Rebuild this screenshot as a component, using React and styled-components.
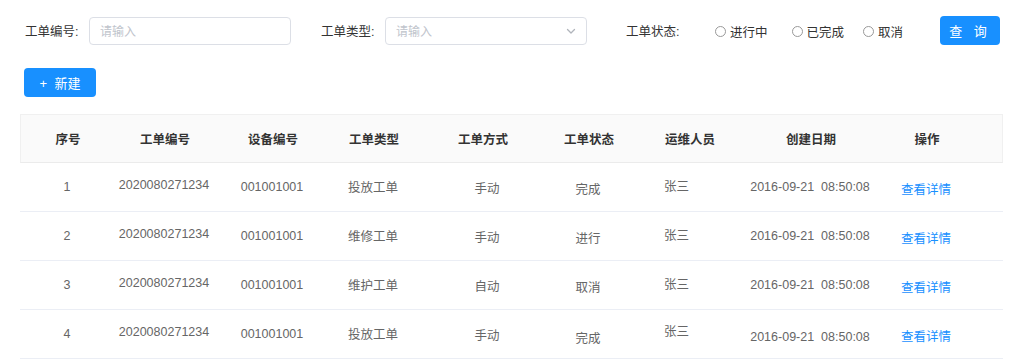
import React from "react";
import styled, { createGlobalStyle } from "styled-components";

const GlobalStyle = createGlobalStyle`
  body {
    margin: 0;
    background: #fff;
    font-family: "Liberation Sans", "Noto Sans CJK SC", sans-serif;
    color: #333;
  }
`;

const Page = styled.div`
  width: 1024px;
  height: 359px;
  overflow: hidden;
`;

const FilterBar = styled.div`
  display: flex;
  align-items: center;
  height: 29px;
  padding: 16px 24px 0 25px;
`;

const Field = styled.div`
  display: flex;
  align-items: center;
  margin-right: ${(p) => p.gap || 0}px;
`;

const Label = styled.span`
  font-size: 12.5px;
  color: #333;
  width: 54px;
  margin-right: 10px;
  white-space: nowrap;
`;

const InputBox = styled.div`
  box-sizing: border-box;
  width: 202px;
  height: 28px;
  border: 1px solid #dcdfe6;
  border-radius: 4px;
  display: flex;
  align-items: center;
  justify-content: space-between;
  padding: 0 9px 0 10px;
  font-size: 12px;
  color: #c0c4cc;
`;

const RadioGroup = styled.div`
  display: flex;
  align-items: center;
  margin-left: 25px;
  padding-top: 2px;
`;

const Radio = styled.label`
  display: flex;
  align-items: center;
  font-size: 12.5px;
  color: #333;
  margin-right: ${(p) => p.gap || 0}px;
`;

const Dot = styled.span`
  box-sizing: border-box;
  width: 11px;
  height: 11px;
  border: 1px solid #999;
  border-radius: 50%;
  margin-right: 4px;
`;

const Button = styled.button`
  box-sizing: border-box;
  height: 29px;
  width: ${(p) => p.w}px;
  border: none;
  border-radius: 4px;
  background: #1890ff;
  color: #fff;
  font-family: inherit;
  font-size: 13px;
  letter-spacing: ${(p) => (p.spaced ? "4px" : "0")};
  padding: 0;
  margin-left: ${(p) => (p.right ? "auto" : "0")};
  white-space: pre;
`;

const ActionRow = styled.div`
  padding: 23px 0 0 24px;
`;

const Table = styled.div`
  margin: 17px 21px 0 20px;
`;

const cols = "94px 100px 116px 86px 132px 80px 122px 120px 112px 1fr";

const HeadRow = styled.div`
  display: grid;
  grid-template-columns: ${cols};
  height: 47px;
  align-items: center;
  background: #fafafa;
  border: 1px solid #f0f0f0;
  border-bottom-color: #ebebeb;
`;

const HeadCell = styled.div`
  text-align: center;
  font-size: 12.5px;
  font-weight: bold;
  color: #333;
  white-space: nowrap;
`;

const Row = styled.div`
  display: grid;
  grid-template-columns: ${cols};
  height: 48px;
  align-items: center;
  border-bottom: 1px solid #ebeef5;
`;

const Cell = styled.div`
  text-align: ${(p) => p.align || "center"};
  padding-left: ${(p) => p.pad || 0}px;
  position: relative;
  top: ${(p) => p.dy || 0}px;
  font-size: 12.5px;
  color: ${(p) => (p.link ? "#1890ff" : "#666")};
  white-space: pre;
`;

const Chevron = () => (
  <svg width="12" height="12" viewBox="0 0 12 12" fill="none">
    <path d="M2.5 4.5 L6 8 L9.5 4.5" stroke="#b0b4bb" strokeWidth="1.3" strokeLinecap="round" strokeLinejoin="round" />
  </svg>
);

const headers = ["序号", "工单编号", "设备编号", "工单类型", "工单方式", "工单状态", "运维人员", "创建日期", "操作"];

const rows = [
  { no: 1, type: "投放工单", mode: "手动", state: "完成" },
  { no: 2, type: "维修工单", mode: "手动", state: "进行" },
  { no: 3, type: "维护工单", mode: "自动", state: "取消" },
  { no: 4, type: "投放工单", mode: "手动", state: "完成", low: true },
];

export default function App() {
  return (
    <Page>
      <GlobalStyle />
      <FilterBar>
        <Field gap={30}>
          <Label>工单编号:</Label>
          <InputBox>请输入</InputBox>
        </Field>
        <Field gap={39}>
          <Label>工单类型:</Label>
          <InputBox>
            请输入
            <Chevron />
          </InputBox>
        </Field>
        <Field>
          <Label>工单状态:</Label>
        </Field>
        <RadioGroup>
          <Radio gap={24}>
            <Dot />
            进行中
          </Radio>
          <Radio gap={19}>
            <Dot />
            已完成
          </Radio>
          <Radio>
            <Dot />
            取消
          </Radio>
        </RadioGroup>
        <Button w={60} right spaced>
          {"查 询"}
        </Button>
      </FilterBar>
      <ActionRow>
        <Button w={72}>{"+  新建"}</Button>
      </ActionRow>
      <Table>
        <HeadRow>
          {headers.map((h) => (
            <HeadCell key={h}>{h}</HeadCell>
          ))}
          <HeadCell />
        </HeadRow>
        {rows.map((r) => (
          <Row key={r.no}>
            <Cell>{r.no}</Cell>
            <Cell dy={-2}>2020080271234</Cell>
            <Cell>001001001</Cell>
            <Cell dy={-1}>{r.type}</Cell>
            <Cell pad={10}>{r.mode}</Cell>
            <Cell dy={r.low ? 3 : 1}>{r.state}</Cell>
            <Cell align="left" pad={36} dy={r.low ? -4 : -2}>
              张三
            </Cell>
            <Cell dy={r.low ? 3 : 0}>{"2016-09-21  08:50:08"}</Cell>
            <Cell link dy={1}>
              查看详情
            </Cell>
            <Cell />
          </Row>
        ))}
      </Table>
    </Page>
  );
}
